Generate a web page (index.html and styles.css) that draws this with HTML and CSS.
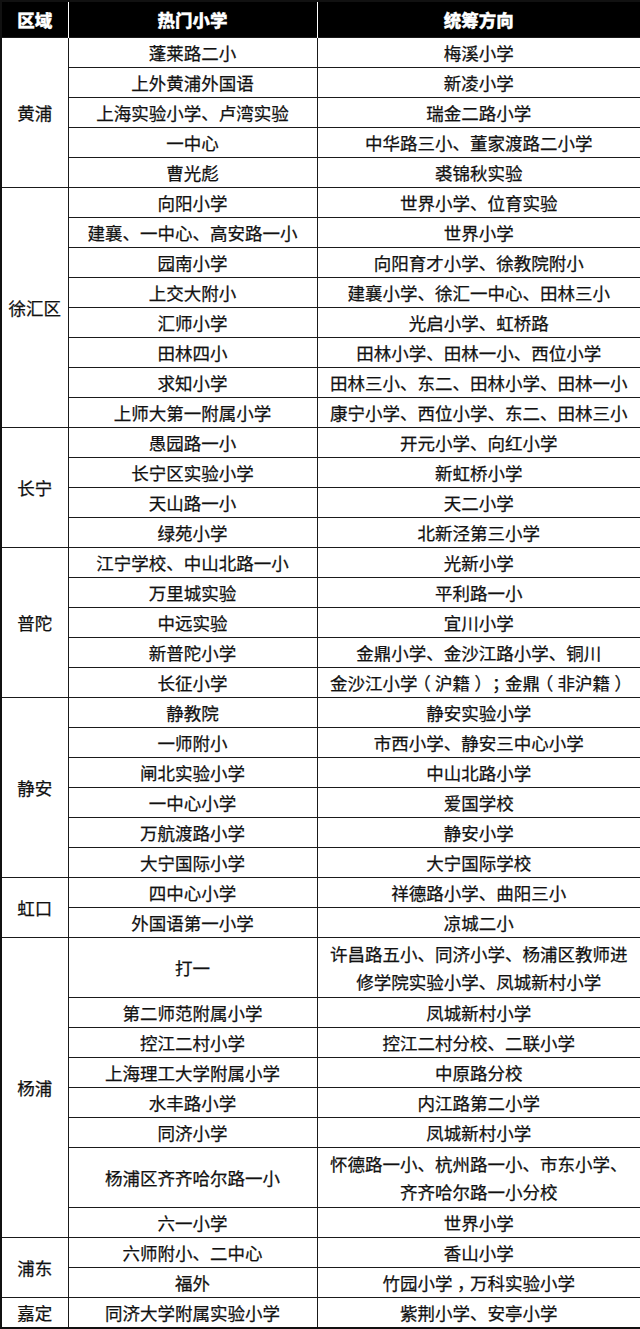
FILE: index.html
```html
<!DOCTYPE html>
<html lang="zh">
<head>
<meta charset="utf-8">
<link rel="stylesheet" href="styles.css">
</head>
<body>
<table class="grid">
  <colgroup>
    <col class="c-area">
    <col class="c-hot">
    <col class="c-dir">
  </colgroup>
  <thead>
    <tr class="head"><th>区域</th><th>热门小学</th><th>统筹方向</th></tr>
  </thead>
  <tbody>
    <tr><td class="area" rowspan="5">黄浦</td><td>蓬莱路二小</td><td>梅溪小学</td></tr>
    <tr><td>上外黄浦外国语</td><td>新凌小学</td></tr>
    <tr><td>上海实验小学、卢湾实验</td><td>瑞金二路小学</td></tr>
    <tr><td>一中心</td><td>中华路三小、董家渡路二小学</td></tr>
    <tr><td>曹光彪</td><td>裘锦秋实验</td></tr>
  </tbody>
  <tbody>
    <tr><td class="area" rowspan="8">徐汇区</td><td>向阳小学</td><td>世界小学、位育实验</td></tr>
    <tr><td>建襄、一中心、高安路一小</td><td>世界小学</td></tr>
    <tr><td>园南小学</td><td>向阳育才小学、徐教院附小</td></tr>
    <tr><td>上交大附小</td><td>建襄小学、徐汇一中心、田林三小</td></tr>
    <tr><td>汇师小学</td><td>光启小学、虹桥路</td></tr>
    <tr><td>田林四小</td><td>田林小学、田林一小、西位小学</td></tr>
    <tr><td>求知小学</td><td>田林三小、东二、田林小学、田林一小</td></tr>
    <tr><td>上师大第一附属小学</td><td>康宁小学、西位小学、东二、田林三小</td></tr>
  </tbody>
  <tbody>
    <tr><td class="area" rowspan="4">长宁</td><td>愚园路一小</td><td>开元小学、向红小学</td></tr>
    <tr><td>长宁区实验小学</td><td>新虹桥小学</td></tr>
    <tr><td>天山路一小</td><td>天二小学</td></tr>
    <tr><td>绿苑小学</td><td>北新泾第三小学</td></tr>
  </tbody>
  <tbody>
    <tr><td class="area" rowspan="5">普陀</td><td>江宁学校、中山北路一小</td><td>光新小学</td></tr>
    <tr><td>万里城实验</td><td>平利路一小</td></tr>
    <tr><td>中远实验</td><td>宜川小学</td></tr>
    <tr><td>新普陀小学</td><td>金鼎小学、金沙江路小学、铜川</td></tr>
    <tr><td>长征小学</td><td>金沙江小学<span class="p">（</span>沪籍<span class="p">）</span><span class="p">；</span>金鼎<span class="p">（</span>非沪籍<span class="p">）</span></td></tr>
  </tbody>
  <tbody>
    <tr><td class="area" rowspan="6">静安</td><td>静教院</td><td>静安实验小学</td></tr>
    <tr><td>一师附小</td><td>市西小学、静安三中心小学</td></tr>
    <tr><td>闸北实验小学</td><td>中山北路小学</td></tr>
    <tr><td>一中心小学</td><td>爱国学校</td></tr>
    <tr><td>万航渡路小学</td><td>静安小学</td></tr>
    <tr><td>大宁国际小学</td><td>大宁国际学校</td></tr>
  </tbody>
  <tbody>
    <tr><td class="area" rowspan="2">虹口</td><td>四中心小学</td><td>祥德路小学、曲阳三小</td></tr>
    <tr><td>外国语第一小学</td><td>凉城二小</td></tr>
  </tbody>
  <tbody>
    <tr class="tall"><td class="area" rowspan="8">杨浦</td><td>打一</td><td>许昌路五小、同济小学、杨浦区教师进<br>修学院实验小学、凤城新村小学</td></tr>
    <tr><td>第二师范附属小学</td><td>凤城新村小学</td></tr>
    <tr><td>控江二村小学</td><td>控江二村分校、二联小学</td></tr>
    <tr><td>上海理工大学附属小学</td><td>中原路分校</td></tr>
    <tr><td>水丰路小学</td><td>内江路第二小学</td></tr>
    <tr><td>同济小学</td><td>凤城新村小学</td></tr>
    <tr class="tall"><td>杨浦区齐齐哈尔路一小</td><td>怀德路一小、杭州路一小、市东小学、<br>齐齐哈尔路一小分校</td></tr>
    <tr><td>六一小学</td><td>世界小学</td></tr>
  </tbody>
  <tbody>
    <tr><td class="area" rowspan="2">浦东</td><td>六师附小、二中心</td><td>香山小学</td></tr>
    <tr><td>福外</td><td>竹园小学<span class="p">，</span>万科实验小学</td></tr>
  </tbody>
  <tbody>
    <tr><td class="area">嘉定</td><td>同济大学附属实验小学</td><td>紫荆小学、安亭小学</td></tr>
  </tbody>
</table>
</body>
</html>
```

FILE: styles.css
```css
html, body {
  margin: 0;
  padding: 0;
  background: #ffffff;
}

body {
  width: 640px;
  font-family: "Noto Sans CJK SC", "Noto Sans", sans-serif;
  color: #111;
  text-spacing-trim: space-all;
}

.grid {
  width: 640px;
  border-collapse: collapse;
  table-layout: fixed;
  border: 2px solid #111;
}

.c-area { width: 67px; }
.c-hot { width: 249px; }
.c-dir { width: 324px; }

.grid th,
.grid td {
  border: 1px solid #1a1a1a;
  padding: 0;
  text-align: center;
  vertical-align: middle;
  font-size: 17.5px;
  line-height: 28px;
  white-space: nowrap;
  -webkit-text-stroke: 0.25px #111;
}

.head th {
  background: #000;
  color: #fff;
  font-weight: 900;
  font-size: 17.5px;
  height: 35px;
  border-color: #fff;
  border-width: 0 1px;
  -webkit-text-stroke: 0.3px #fff;
}

.head th:first-child { border-left-color: #000; }
.head th:last-child { border-right-color: #000; }

.grid td {
  height: 29px;
}

.grid tr.tall td {
  height: 59px;
}

.area {
  font-size: 18px;
}

/* full-width punctuation, glyph centred in its em box */
.p {
  font-feature-settings: "halt" 1;
  padding: 0 0.25em;
}
```
